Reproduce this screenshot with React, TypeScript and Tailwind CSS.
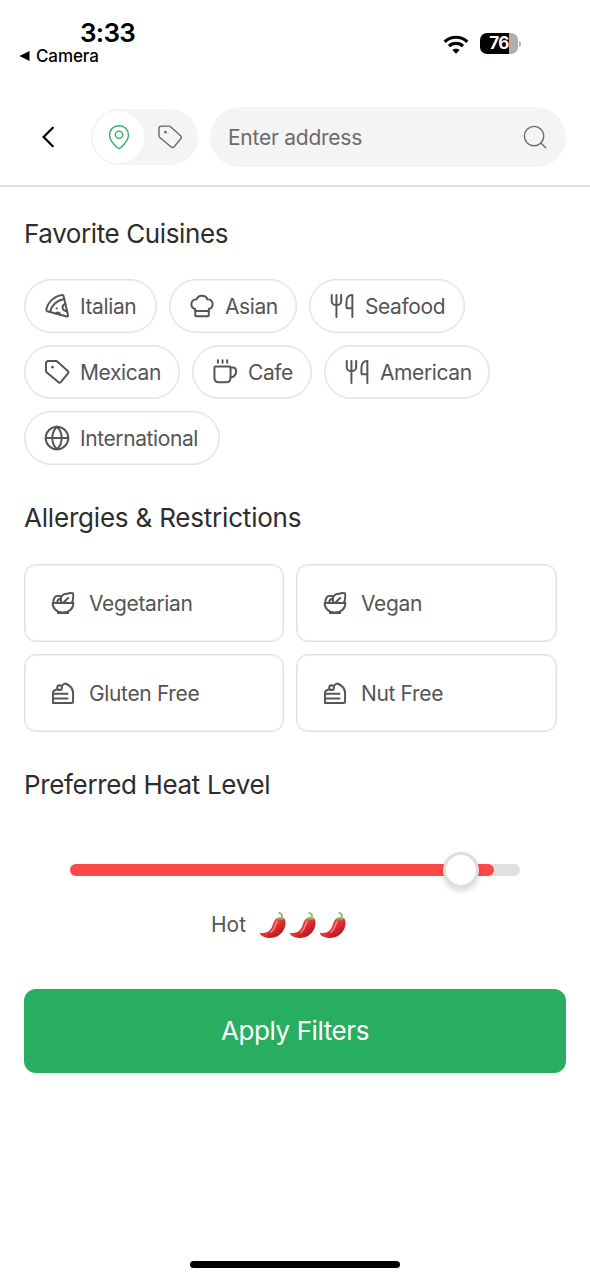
import { useState } from "react";
import type { ReactNode } from "react";

function Icon({ children, thin = false, className = "" }: { children: ReactNode; thin?: boolean; className?: string }) {
  return (
    <svg
      viewBox="-0.8 -0.8 27.6 27.6"
      className={`h-[26px] w-[26px] shrink-0 ${className}`}
      fill="none"
      stroke="currentColor"
      strokeWidth={thin ? 1.45 : 2.1}
      strokeLinecap="round"
      strokeLinejoin="round"
    >
      {children}
    </svg>
  );
}

const pizza = (
  <>
    <path d="M18.6 1.3C10 2.5 3.3 8.8 1.7 16.7c-.2 1 .2 1.6 1.100 1.900l20.500 5.500c1 .3 1.600-.3 1.400-1.200L19.900 2.200c-.2-.7-.6-1-1.300-.9Z" />
    <path d="M20.600 5.500C13.300 6.700 7.300 12.200 5.700 19.200" />
    <path d="M21.900 10.800c-4.300.9-4.400 7.300 1.800 7.700M12.300 21.500c.5-2.500 3.700-2.300 4.200 1M12.600 15.500l.2-.1" />
  </>
);

const chefHat = (
  <>
    <path d="M5.800 22.800v-6.600C3.100 15.700 1.700 13.600 1.700 11c0-3.200 2.500-5.300 5.500-5C8.100 3.300 10.300 2 13 2s4.900 1.300 5.800 4c3-.3 5.500 1.800 5.500 5 0 2.600-1.400 4.700-4.100 5.200v6.600c0 .7-.4 1.100-1.100 1.100H6.900c-.7 0-1.100-.4-1.100-1.100Z" />
    <path d="M6 18.200h14" />
  </>
);

const cutlery = (
  <>
    <path d="M2.100 1.200v6.400c0 3 2.100 4.500 5 4.500s5-1.500 5-4.500V1.200M7.100 1.200v23.600" />
    <path d="M24 24.800V1.200c-4.800 0-6.300 3.900-6.300 8.400v4.100c0 1.100.6 1.700 1.700 1.700H24" />
  </>
);

const tag = (
  <>
    <path d="M1.300 4.100c0-1.600 1-2.700 2.700-2.700h7.500c1 0 1.700.3 2.400 1l10.300 9.200c1.100 1 1.100 2.100.2 3.200l-7.100 8.700c-.8 1-2 1.100-3 .2L2.200 13.600c-.6-.6-.9-1.200-.9-2.100Z" />
    <path d="M8.200 7.800v.1" strokeWidth={2.700} />
  </>
);

const cup = (
  <>
    <path d="M1.800 8.300c0-.8.4-1.200 1.200-1.200h14.700c.8 0 1.200.4 1.200 1.200v10.800c0 3-1.700 4.800-4.800 4.800H6.600c-3.100 0-4.800-1.800-4.800-4.800Z" />
    <path d="M19 8.200h2c2.500 0 3.800 1.400 3.800 3.900 0 3.700-2.100 6.100-5.900 6.600M5.500.6v2.700M10.400.6v2.700M15.300.6v2.700" />
  </>
);

const globe = (
  <>
    <circle cx="13" cy="13" r="12" />
    <path d="M1 13h24M13 1c-3.200 3.100-5 7.200-5 12s1.800 8.900 5 12c3.200-3.100 5-7.200 5-12s-1.800-8.900-5-12Z" />
  </>
);

const bowl = (
  <>
    <path d="M2 12.900h22c.1 5.600-4.200 10.200-11 10.200S1.900 18.500 2 12.900ZM7.500 23.700h11" />
    <path d="M3 12.500c-.6-4.300 1.700-7.200 5-7.200 1.200 0 2.300.4 3 1M6.900 12.600c0-2.600 1.300-4 3.700-4.100" />
    <path d="M11.300 12.600C8.900 7.400 12.400 2.800 17.600 3.200c1.900-.9 4.100-1.100 5.900-.6.500 1.600.6 3.500.1 5.300.3 2-.2 3.500-1.400 4.700M13.500 12.500l5.100-4.900" />
  </>
);

const cake = (
  <>
    <path d="M7.200 9.100c-2.500.6-4.900 1.900-4.900 4v10.600h20.100c.8 0 1.300-.4 1.300-1.300v-9.400c0-4.900-3.400-8.100-7.900-10.100-1.400.1-2.900 1.200-4 2.500" />
    <circle cx="9.400" cy="7.300" r="2.500" />
    <path d="M2.500 13.900h15.300M2.500 18.800h15.300" />
  </>
);

const CUISINE_ROWS = [
  [
    { label: "Italian", icon: pizza, width: "w-[133px]" },
    { label: "Asian", icon: chefHat, width: "w-[128px]" },
    { label: "Seafood", icon: cutlery, width: "w-[156px]" },
  ],
  [
    { label: "Mexican", icon: tag, width: "w-[156px]" },
    { label: "Cafe", icon: cup, width: "w-[120px]" },
    { label: "American", icon: cutlery, width: "w-[166px]" },
  ],
  [{ label: "International", icon: globe, width: "w-[196px]" }],
];

const RESTRICTIONS = [
  { label: "Vegetarian", icon: bowl },
  { label: "Vegan", icon: bowl },
  { label: "Gluten Free", icon: cake },
  { label: "Nut Free", icon: cake },
];

function StatusBar() {
  return (
    <div className="flex h-[107px] items-start justify-between">
      <div className="pl-[19px] pt-[17px] text-black">
        <div className="pl-[61px] text-[26px] font-semibold leading-8 tracking-[-0.7px]">3:33</div>
        <div className="-mt-[3px] flex items-center gap-[6px] text-[17px] font-medium leading-5 tracking-[-0.1px]">
          <svg viewBox="0 0 11 12" className="h-3 w-[11px]">
            <path d="M10.500 1v10L.5 6Z" fill="currentColor" />
          </svg>
          Camera
        </div>
      </div>
      <div className="flex items-center gap-[11px] pr-[69px] pt-[33px]">
        <svg viewBox="0 0 26 20" className="h-5 w-[26px]" fill="none" stroke="black" strokeWidth="3.200">
          <path d="M1.700 7.800C8 1.700 18 1.700 24.300 7.800M6 12.200c4-3.800 10-3.800 14 0" />
          <path d="M13 19.800l-3.600-3.700c2-1.900 5.200-1.900 7.200 0Z" fill="black" stroke="none" />
        </svg>
        <div className="flex items-center gap-px">
          <div className="flex h-[21px] w-[38px] items-center justify-center rounded-[7px] bg-linear-to-r from-black from-75% to-[#aeaeae] to-75% text-[17px] font-bold leading-none tracking-[-0.5px] text-white">
            76
          </div>
          <div className="h-[6px] w-[2px] rounded-r-full bg-[#b5b5b5]" />
        </div>
      </div>
    </div>
  );
}

function Header() {
  return (
    <header className="flex h-20 items-start border-b-2 border-[#e4e4e4] pl-[42px] pr-6">
      <button aria-label="Back" className="mt-[19px] text-black">
        <svg viewBox="0 0 12 22" className="h-[22px] w-3" fill="none" stroke="currentColor" strokeWidth="2.200" strokeLinecap="round">
          <path d="M10.800 1.700L1.600 11l9.200 9.300" />
        </svg>
      </button>
      <div className="ml-[37px] mt-[2px] flex h-14 w-[107px] items-center rounded-full bg-[#f4f4f4] pl-[2px] text-[#666]">
        <div className="flex h-[52px] w-[51px] items-center justify-center rounded-full bg-white text-[#27ae60]">
          <Icon thin>
            <path d="M23 11.200c0 5-4.500 9.800-8.300 13.200-1.100.9-2.300.9-3.400 0C7.500 21 3 16.200 3 11.200 3 5.100 7.400 1 13 1s10 4.100 10 10.200Z" />
            <circle cx="13" cy="10.600" r="3.900" />
          </Icon>
        </div>
        <Icon thin className="ml-[13px]">{tag}</Icon>
      </div>
      <div className="ml-3 flex h-[60px] w-[356px] items-center justify-between rounded-full bg-[#f4f4f4] pl-[18px] pr-[18px] text-[#6b6b6b]">
        <span className="pt-[2px] text-[21px] tracking-[-0.25px]">Enter address</span>
        <Icon thin>
          <circle cx="12" cy="12" r="10.300" />
          <path d="M19.600 19.600l4.800 4.800" />
        </Icon>
      </div>
    </header>
  );
}

function Heading({ children, className = "tracking-[-0.4px]" }: { children: ReactNode; className?: string }) {
  return <h2 className={`text-[26px] leading-8 text-[#2d2d2d] ${className}`}>{children}</h2>;
}

function Pepper() {
  return (
    <svg viewBox="0 0 28 28" className="h-7 w-7 shrink-0">
      <defs>
        <linearGradient id="pepper" x1="0" y1="0" x2="1" y2="1">
          <stop offset="0.2" stopColor="#f2605a" />
          <stop offset="0.6" stopColor="#d9252b" />
          <stop offset="1" stopColor="#8f1219" />
        </linearGradient>
      </defs>
      <path
        d="M16.500 8.200c1.800-1.600 7.200-1.900 9.400.1 1.900 5-.5 12.300-6 16-5.400 3.700-14.800 3.700-18.800-1.100-.6-.9-.1-1.500.8-1.300 8.300.8 10.800-4.400 12.100-8.900.5-1.900 1.200-3.600 2.500-4.800Z"
        fill="url(#pepper)"
      />
      <path d="M18.200 10.200c-1.800 2.700-2.200 7.900-6.300 11.100" stroke="#ff9a91" strokeWidth="1.500" strokeLinecap="round" fill="none" opacity=".8" />
      <path d="M16.200 8.700c1.700-2.500 3.600-2.500 5.800-2.500 2.400 0 3.900.8 4.300 2.500-1.500-.8-2.600-.5-3.300.9-1-1.700-2.200-1.800-3.200-.5-.9-1-2-1.200-3.600-.4Z" fill="#8dae5f" />
      <path d="M22.300 6.800c1.300-2 .9-4.200-2.100-4.900" stroke="#91b96b" strokeWidth="1.900" strokeLinecap="round" fill="none" />
    </svg>
  );
}

export default function App() {
  const [selected, setSelected] = useState<string[]>([]);

  const toggle = (label: string) =>
    setSelected((prev) => (prev.includes(label) ? prev.filter((l) => l !== label) : [...prev, label]));

  return (
    <div className="flex h-[1280px] w-[590px] flex-col overflow-hidden bg-white font-['Inter',sans-serif] text-[#555]">
      <StatusBar />
      <Header />
      <main className="flex flex-col px-6 pt-[31px]">
        <Heading>Favorite Cuisines</Heading>
        <div className="mt-[29px] flex flex-col gap-3">
          {CUISINE_ROWS.map((row, i) => (
            <div key={i} className="flex gap-3">
              {row.map(({ label, icon, width }) => (
                <button
                  key={label}
                  onClick={() => toggle(label)}
                  aria-pressed={selected.includes(label)}
                  className={`flex h-[54px] items-center gap-[10px] whitespace-nowrap rounded-full border border-[#e0e0e0] pl-[19px] text-[21px] tracking-[-0.4px] inset-ring inset-ring-[#f0f0f0] ${width}`}
                >
                  <Icon>{icon}</Icon>
                  <span className="pt-px">{label}</span>
                </button>
              ))}
            </div>
          ))}
        </div>

        <div className="mt-[37px]">
          <Heading className="tracking-[-0.2px]">Allergies &amp; Restrictions</Heading>
        </div>
        <div className="mt-[30px] grid w-[533px] grid-cols-[260px_261px] gap-3">
          {RESTRICTIONS.map(({ label, icon }) => (
            <button
              key={label}
              onClick={() => toggle(label)}
              aria-pressed={selected.includes(label)}
              className="flex h-[78px] items-center gap-[13px] rounded-xl border border-[#e0e0e0] pl-[25px] text-[21px] tracking-[-0.35px] inset-ring inset-ring-[#f0f0f0]"
            >
              <Icon>{icon}</Icon>
              <span className="pt-px">{label}</span>
            </button>
          ))}
        </div>

        <div className="mt-[37px]">
          <Heading className="tracking-[-0.35px]">Preferred Heat Level</Heading>
        </div>
        <div className="relative mx-[46px] mt-[63px] h-3 rounded-full bg-[#e0e0e0]">
          <div className="h-3 w-[424px] rounded-full bg-[#ff4848]" />
          <div className="absolute -top-[12px] left-[373px] h-9 w-9 rounded-full border-[3px] border-[#dedede] bg-white shadow-[0_3px_6px_rgba(0,0,0,0.15)]" />
        </div>
        <div className="mt-[35px] flex items-center pl-[187px]">
          <span className="w-[48px] text-[21px] leading-7">Hot</span>
          <div className="flex gap-[2px]">
            <Pepper />
            <Pepper />
            <Pepper />
          </div>
        </div>

        <button className="mt-[50px] h-[84px] rounded-xl bg-[#27ae60] pb-[2px] text-[26px] tracking-[-0.4px] text-white">
          Apply Filters
        </button>
      </main>
      <div className="mx-auto mb-3 mt-auto h-[7px] w-[210px] rounded-full bg-black" />
    </div>
  );
}
